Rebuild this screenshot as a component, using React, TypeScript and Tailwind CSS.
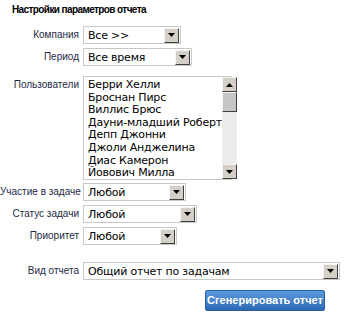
import React from 'react';

const users = [
  'Берри Хелли',
  'Броснан Пирс',
  'Виллис Брюс',
  'Дауни-младший Роберт',
  'Депп Джонни',
  'Джоли Анджелина',
  'Диас Камерон',
  'Йовович Милла',
];

const verdana = { fontFamily: '"DejaVu Sans", Verdana, sans-serif' };

function Arrow({ up = false }: { up?: boolean }) {
  return (
    <div className="w-[15px] h-[15px] shrink-0 bg-[#d4d0c8] border-t border-l border-t-[#f4f4f4] border-l-[#f4f4f4] border-r border-b border-r-[#404040] border-b-[#404040] flex items-center justify-center">
      <svg width="7" height="4" viewBox="0 0 7 4">
        {up ? <path d="M0 4 L3.5 0 L7 4 Z" fill="#000" /> : <path d="M0 0 L7 0 L3.5 4 Z" fill="#000" />}
      </svg>
    </div>
  );
}

function Select({ value, width }: { value: string; width: string }) {
  return (
    <div className={`${width} h-[18px] border border-[#c8c8c8] bg-white flex items-center justify-between pl-[4px] pr-px`}>
      <span className="text-[11px] tracking-[-0.2px] text-black leading-none" style={verdana}>{value}</span>
      <Arrow />
    </div>
  );
}

function Row({ label, children, className = '' }: { label: string; children: React.ReactNode; className?: string }) {
  return (
    <div className={`flex items-center ${className}`}>
      <div className="w-[83px] pr-[4px] text-right text-[10px] text-[#1e2a44] leading-none whitespace-nowrap">{label}</div>
      {children}
    </div>
  );
}

export default function App() {
  return (
    <div className="w-[350px] h-[314px] bg-white overflow-hidden" style={{ fontFamily: '"Liberation Sans", Arial, sans-serif' }}>
      <div className="pt-[4px] pl-[12px] text-[10px] tracking-[-0.6px] font-bold text-black leading-[12px]">Настройки параметров отчета</div>

      <Row label="Компания" className="mt-[10px]">
        <Select value="Все >>" width="w-[98px]" />
      </Row>
      <Row label="Период" className="mt-[4px]">
        <Select value="Все время" width="w-[109px]" />
      </Row>

      <div className="flex mt-[10px]">
        <div className="w-[83px] pr-[4px] pt-[4px] text-right text-[10px] text-[#1e2a44] leading-none">Пользователи</div>
        <div className="w-[149px] h-[104px] border border-[#c8c8c8] bg-white flex">
          <div className="flex-1 pl-[4px] pt-[2px]" style={verdana}>
            {users.map((u) => (
              <div key={u} className="text-[11px] tracking-[-0.2px] leading-[12.6px] text-black whitespace-nowrap">{u}</div>
            ))}
          </div>
          <div className="w-[16px] flex flex-col bg-[#ececec]">
            <Arrow up />
            <div className="w-[15px] h-[20px] bg-[#c6c6c6] border-t border-l border-t-[#f4f4f4] border-l-[#f4f4f4] border-r border-b border-r-[#404040] border-b-[#404040]" />
            <div className="flex-1" />
            <Arrow />
          </div>
        </div>
      </div>

      <Row label="Участие в задаче" className="mt-[3px]">
        <Select value="Любой" width="w-[103px]" />
      </Row>
      <Row label="Статус задачи" className="mt-[4px]">
        <Select value="Любой" width="w-[114px]" />
      </Row>
      <Row label="Приоритет" className="mt-[4px]">
        <Select value="Любой" width="w-[94px]" />
      </Row>

      <Row label="Вид отчета" className="mt-[17px]">
        <Select value="Общий отчет по задачам" width="w-[257px]" />
      </Row>

      <div className="flex justify-end pr-[25px] mt-[10px]">
        <button className="w-[120px] h-[21px] rounded-[2px] bg-gradient-to-b from-[#5b9be0] to-[#2d69b3] border border-[#2a5f9e] text-white text-[11px] font-bold leading-none">
          Сгенерировать отчет
        </button>
      </div>
    </div>
  );
}
